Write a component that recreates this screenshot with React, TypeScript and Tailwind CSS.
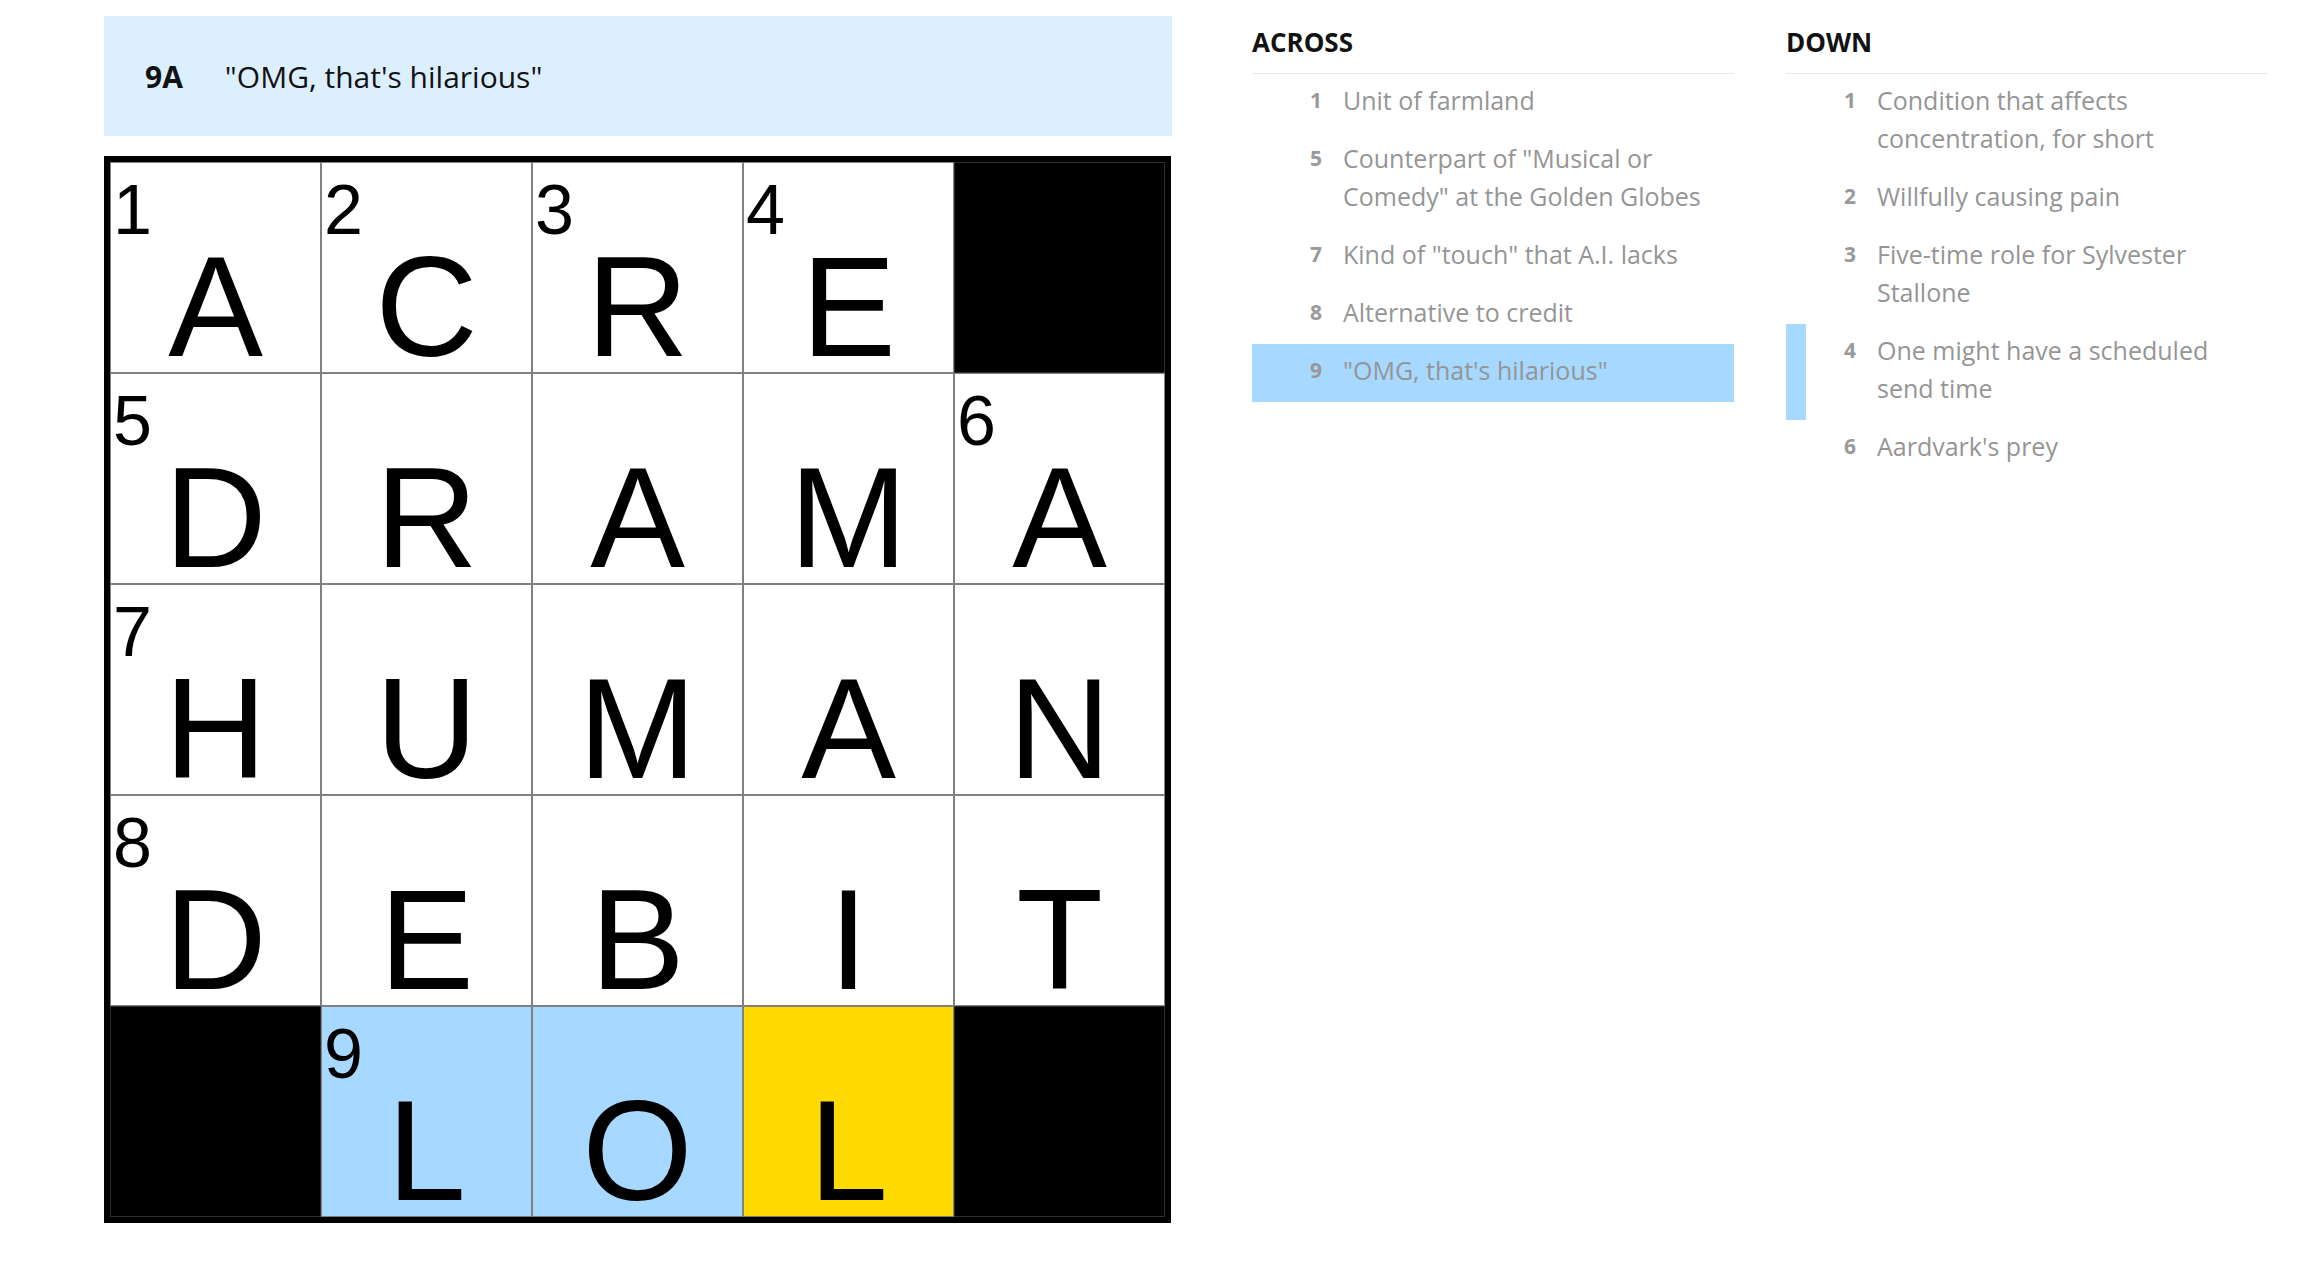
import React from "react";

type Cell = { l?: string; n?: number; black?: boolean; hl?: "blue" | "yellow" };

const rows: Cell[][] = [
  [{ l: "A", n: 1 }, { l: "C", n: 2 }, { l: "R", n: 3 }, { l: "E", n: 4 }, { black: true }],
  [{ l: "D", n: 5 }, { l: "R" }, { l: "A" }, { l: "M" }, { l: "A", n: 6 }],
  [{ l: "H", n: 7 }, { l: "U" }, { l: "M" }, { l: "A" }, { l: "N" }],
  [{ l: "D", n: 8 }, { l: "E" }, { l: "B" }, { l: "I" }, { l: "T" }],
  [{ black: true }, { l: "L", n: 9, hl: "blue" }, { l: "O", hl: "blue" }, { l: "L", hl: "yellow" }, { black: true }],
];

const across = [
  { n: 1, t: "Unit of farmland" },
  { n: 5, t: 'Counterpart of "Musical or Comedy" at the Golden Globes' },
  { n: 7, t: 'Kind of "touch" that A.I. lacks' },
  { n: 8, t: "Alternative to credit" },
  { n: 9, t: '"OMG, that\'s hilarious"', active: true },
];

const down = [
  { n: 1, t: "Condition that affects concentration, for short" },
  { n: 2, t: "Willfully causing pain" },
  { n: 3, t: "Five-time role for Sylvester Stallone" },
  { n: 4, t: "One might have a scheduled send time", related: true },
  { n: 6, t: "Aardvark's prey" },
];

function GridCell({ c }: { c: Cell }) {
  if (c.black) {
    return <div className="h-[211px] w-[211px] border border-[#2e2e2e] bg-black" />;
  }
  const bg = c.hl === "blue" ? "bg-[#a7d8ff]" : c.hl === "yellow" ? "bg-[#ffda00]" : "bg-white";
  return (
    <div className={`relative h-[211px] w-[211px] border border-[#808080] ${bg}`}>
      {c.n !== undefined && (
        <span className="absolute left-[2px] top-[12px] text-[70px] leading-none text-black">{c.n}</span>
      )}
      <span className="absolute left-0 right-0 top-[73px] text-center text-[142px] leading-none text-black">
        {c.l}
      </span>
    </div>
  );
}

function ClueItem({ n, t, active, related }: { n: number; t: string; active?: boolean; related?: boolean }) {
  const cls = active
    ? "bg-[#a7d8ff] border-[#a7d8ff]"
    : related
    ? "border-[#a7d8ff]"
    : "border-transparent";
  return (
    <li className={`flex border-l-[20px] pb-[13px] pt-[7px] ${cls}`}>
      <span className="w-[50px] shrink-0 text-right text-[21px] font-bold leading-[38px] text-[#999999]">{n}</span>
      <span className="ml-[21px] w-[388px] text-[25px] leading-[38px] text-[#959595]">{t}</span>
    </li>
  );
}

function ClueList({ title, items }: { title: string; items: any[] }) {
  return (
    <div className="w-[482px]">
      <h3 className="border-b border-[#e6e6e6] pb-[16px] text-[26px] font-bold uppercase leading-[30px] text-[#121212]">
        {title}
      </h3>
      <ol className="m-0 list-none p-0">
        {items.map((it) => (
          <ClueItem key={it.n} {...it} />
        ))}
      </ol>
    </div>
  );
}

export default function App() {
  return (
    <div
      className="flex min-h-[1284px] w-[2312px] bg-white pl-[104px] pt-[16px]"
      style={{ fontFamily: '"Open Sans", "Liberation Sans", sans-serif' }}
    >
      <div className="w-[1068px] shrink-0">
        <div className="flex h-[120px] items-center bg-[#dcefff] pl-[41px] text-[30px] text-[#121212]">
          <span className="font-bold">9A</span>
          <span className="ml-[42px]">"OMG, that's hilarious"</span>
        </div>
        <div
          className="mt-[20px] inline-block border-[6px] border-black"
          style={{ fontFamily: '"Liberation Sans", Arial, sans-serif' }}
        >
          {rows.map((r, i) => (
            <div key={i} className="flex">
              {r.map((c, j) => (
                <GridCell key={j} c={c} />
              ))}
            </div>
          ))}
        </div>
      </div>
      <div className="ml-[80px] flex gap-[52px] pt-[11px]">
        <ClueList title="Across" items={across} />
        <ClueList title="Down" items={down} />
      </div>
    </div>
  );
}
